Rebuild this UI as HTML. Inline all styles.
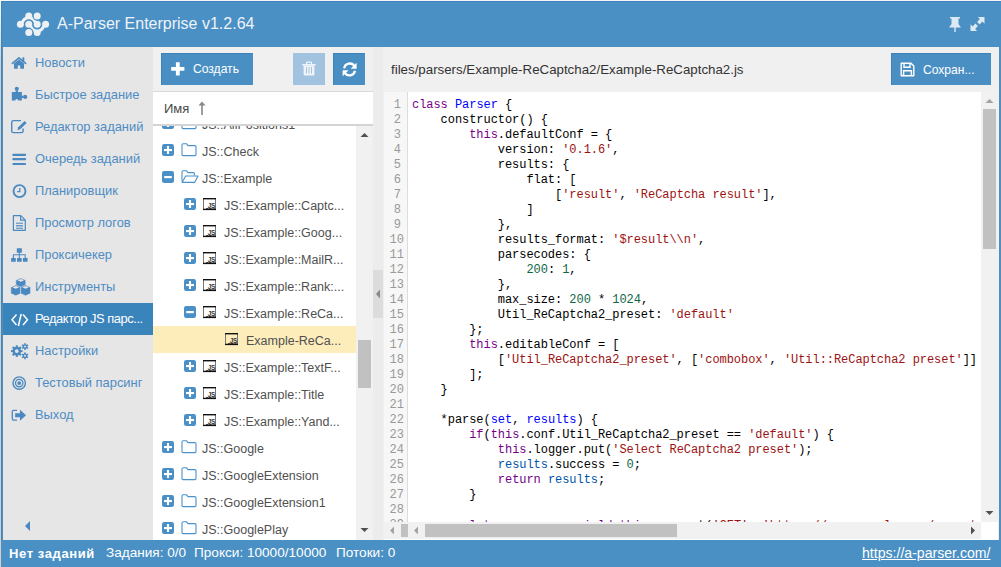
<!DOCTYPE html>
<html><head><meta charset="utf-8">
<style>
*{box-sizing:border-box;margin:0;padding:0}
html,body{width:1001px;height:567px;overflow:hidden;background:#f6f6f6;font-family:"Liberation Sans",sans-serif}
.a{position:absolute}
svg.a{overflow:visible}
#win{position:absolute;left:1px;top:1px;width:1000px;height:566px;background:#4a90c4;border-left:1px solid #3f85bd;border-top:1px solid #3f85bd;overflow:hidden}
#title{left:57px;top:15px;font-size:16px;color:#eef3f8;white-space:nowrap;line-height:18px}
#side{left:3px;top:47px;width:150px;height:493px;background:#e6e6e6}
.si{position:absolute;left:0;width:150px;height:32px}
.si .tx{position:absolute;left:32px;top:9px;font-size:12.9px;color:#4e8cc4;white-space:nowrap;line-height:14px}
.si.sel{background:#3a84bc}
.si.sel .tx{color:#fff;letter-spacing:-0.45px}
#tree{left:153px;top:47px;width:220px;height:493px;background:#fff}
#tbar{left:0;top:0;width:220px;height:45px;background:#f0f0f0;border-bottom:1px solid #d9d9d9}
.btn{position:absolute;background:#4a8fc4;border-top:1px solid #3d82b8;border-left:1px solid #3d82b8}
.btn .bt{position:absolute;color:#fff;font-size:12.1px;white-space:nowrap;line-height:14px}
#thead{left:0;top:45px;width:220px;height:34px;background:#fff;border-bottom:2px solid #d4d4d4}
#list{left:0;top:79px;width:203px;height:414px;overflow:hidden;background:#fff}
.tr{position:absolute;left:0;width:203px;height:27px}
.tr .t{position:absolute;top:7px;font-size:12.5px;color:#505050;white-space:nowrap;line-height:16px}
.tr.sel{background:#fdedbb}
#tsb{left:203px;top:79px;width:17px;height:414px;background:#f1f1f1}
#split{left:373px;top:47px;width:10px;height:493px;background:#ececec}
#ed{left:383px;top:47px;width:616px;height:493px;background:#f0f0f0}
#path{left:8px;top:15px;font-size:13.3px;color:#333;white-space:nowrap;line-height:16px}
#code{left:1px;top:45px;width:614px;height:448px;background:#fff;overflow:hidden}
#gut{left:0;top:0;width:24px;height:430px;background:#f7f7f7;border-right:1px solid #ddd}
.ln{position:absolute;right:6px;font-family:"Liberation Mono",monospace;font-size:12px;color:#999;line-height:15px}
#lines{left:28px;top:5.5px;font-family:"Liberation Mono",monospace;font-size:12px;letter-spacing:-0.05px;line-height:15px;color:#000;white-space:pre}
.k{color:#708}.d{color:#00f}.s{color:#9c1212}.n{color:#164}.v{color:#05a}
#vsb{left:597px;top:0;width:17px;height:430px;background:#f1f1f1}
#hsb{left:0;top:430px;width:597px;height:17px;background:#f1f1f1}
#corner{left:597px;top:430px;width:17px;height:17px;background:#fff}
#status{left:1px;top:540px;width:1000px;height:27px;background:#4a90c4;color:#fff;font-size:13.6px;white-space:nowrap}
#status div{position:absolute;top:5px;line-height:16px}
</style></head><body>
<div id="win"></div><div class="a" style="left:0;top:1px;width:1px;height:566px;background:linear-gradient(#fafafa,#d6d0ca 60px,#d6d0ca)"></div>
<!-- header -->
<svg class="a" style="left:0;top:0" width="60" height="47">
  <g fill="none" stroke="#eef1f4" stroke-width="3.4">
    <path d="M22.2 24.3 A6.6 6.6 0 0 1 35.4 24.3"/>
    <path d="M30.6 24.3 A6.6 6.6 0 0 0 43.8 24.3"/>
  </g>
  <g fill="#eef1f4">
    <circle cx="28.8" cy="15.9" r="3.5"/>
    <circle cx="20.4" cy="24.3" r="3.5"/><circle cx="28.8" cy="24.3" r="3.5"/><circle cx="37.2" cy="24.3" r="3.5"/><circle cx="45.6" cy="24.3" r="3.5"/>
    <circle cx="37.2" cy="32.5" r="3.5"/>
  </g>
  <g fill="none" stroke="#4a90c4" stroke-width="1.1">
    <path d="M24.2 24.3 A4.6 4.6 0 0 1 33.4 24.3"/>
    <path d="M32.6 24.3 A4.6 4.6 0 0 0 41.8 24.3"/>
  </g>
  <circle cx="37.2" cy="15.9" r="4.7" fill="#4a90c4"/><circle cx="28.8" cy="32.5" r="4.7" fill="#4a90c4"/>
  <circle cx="37.2" cy="15.9" r="3.5" fill="#eef1f4"/><circle cx="28.8" cy="32.5" r="3.5" fill="#eef1f4"/>
</svg>
<div class="a" id="title">A-Parser Enterprise v1.2.64</div>
<svg class="a" style="left:945px;top:14px" width="45" height="22">
  <g fill="#dde9f3">
    <path d="M5 3 H15 V4.5 H13.5 V10 L16 13.5 H4 L6.5 10 V4.5 H5 Z"/>
    <rect x="9.3" y="13" width="1.4" height="5"/>
    <path d="M32.8 3 H39.5 V9.7 L37.4 7.6 L34.6 10.4 L32.1 7.9 L34.9 5.1 Z"/><path d="M25.5 10.3 V17 H32.2 L30.1 14.9 L32.9 12.1 L30.4 9.6 L27.6 12.4 Z"/>
  </g>
</svg>

<div class="a" id="side">
<div class="si" style="top:0px"><svg class="a" style="left:-3px;top:0px" width="40" height="32" viewBox="0 0 40 32" ><path d="M12.4 16.4 L19 10.8 L25.6 16.4" fill="none" stroke="#4a88c0" stroke-width="1.7" stroke-linecap="round" stroke-linejoin="round"/><rect x="22.4" y="10.3" width="1.9" height="4" fill="#4a88c0"/><path d="M14 16.5 L19 12.4 L24 16.5 V21.8 H20.2 V18.6 H17.8 V21.8 H14 Z" fill="#4a88c0"/></svg><div class="tx">Новости</div></div>
<div class="si" style="top:32px"><svg class="a" style="left:-3px;top:0px" width="40" height="32" viewBox="0 0 40 32" ><path d="M11.8 12.9 H15.6 V11.5 H18 V12.9 H21.9 V16.8 H23.5 V19 H21.9 V21.6 H18.3 A1.5 1.5 0 0 0 15.3 21.6 H11.8 Z" fill="#4a88c0"/><circle cx="16.8" cy="9.8" r="2.1" fill="#4a88c0"/><circle cx="25.2" cy="17.9" r="2.1" fill="#4a88c0"/></svg><div class="tx">Быстрое задание</div></div>
<div class="si" style="top:64px"><svg class="a" style="left:-3px;top:0px" width="40" height="32" viewBox="0 0 40 32" ><path d="M21 9.6 H13.3 A1.6 1.6 0 0 0 11.7 11.2 V20 A1.6 1.6 0 0 0 13.3 21.6 H21.5 A1.6 1.6 0 0 0 23.1 20 V17.5" fill="none" stroke="#4a88c0" stroke-width="1.4"/><path d="M18.2 16.3 L24.6 9.9 L26.6 11.9 L20.2 18.3 L17.4 19.2 Z" fill="#4a88c0"/></svg><div class="tx">Редактор заданий</div></div>
<div class="si" style="top:96px"><svg class="a" style="left:-3px;top:0px" width="40" height="32" viewBox="0 0 40 32" ><rect x="12.3" y="10.8" width="13.8" height="2.2" rx="1" fill="#4a88c0"/><rect x="12.3" y="15" width="13.8" height="2.2" rx="1" fill="#4a88c0"/><rect x="12.3" y="19.9" width="13.8" height="2.2" rx="1" fill="#4a88c0"/></svg><div class="tx">Очередь заданий</div></div>
<div class="si" style="top:128px"><svg class="a" style="left:-3px;top:0px" width="40" height="32" viewBox="0 0 40 32" ><circle cx="19.5" cy="16.1" r="6" fill="none" stroke="#4a88c0" stroke-width="1.9"/><path d="M19.8 12.9 V16.6 H17.1" fill="none" stroke="#4a88c0" stroke-width="1.3"/></svg><div class="tx">Планировщик</div></div>
<div class="si" style="top:160px"><svg class="a" style="left:-3px;top:0px" width="40" height="32" viewBox="0 0 40 32" ><path d="M13.4 8.6 H20.8 L25.3 13.1 V23.3 H13.4 Z" fill="none" stroke="#4a88c0" stroke-width="1.2" stroke-linejoin="round"/><path d="M20.6 8.8 V13.2 H25" fill="none" stroke="#4a88c0" stroke-width="1.2"/><rect x="16" y="15.7" width="7" height="1" fill="#4a88c0"/><rect x="16" y="18.2" width="7" height="1.2" fill="#4a88c0"/><rect x="16" y="20.7" width="7" height="1" fill="#4a88c0"/></svg><div class="tx">Просмотр логов</div></div>
<div class="si" style="top:192px"><svg class="a" style="left:-3px;top:0px" width="40" height="32" viewBox="0 0 40 32" ><rect x="16.8" y="9.2" width="5.1" height="4.6" rx="0.6" fill="#4a88c0"/><rect x="11.1" y="18.9" width="4.7" height="3.9" rx="0.5" fill="#4a88c0"/><rect x="17" y="18.9" width="4.7" height="3.9" rx="0.5" fill="#4a88c0"/><rect x="22.9" y="18.9" width="4.7" height="3.9" rx="0.5" fill="#4a88c0"/><path d="M19.35 13.5 V19 M13.4 19 V15.7 H25.2 V19" fill="none" stroke="#4a88c0" stroke-width="1.1"/></svg><div class="tx">Проксичекер</div></div>
<div class="si" style="top:224px"><svg class="a" style="left:-3px;top:0px" width="40" height="32" viewBox="0 0 40 32" ><path d="M15.8 9.2 L20.8 7.0 L25.8 9.2 V15.600000000000001 L20.8 17.8 L15.8 15.600000000000001 Z" fill="#4a88c0" stroke="#e6e6e6" stroke-width="0.6"/><path d="M17.400000000000002 9.2 L20.8 8.0 L24.2 9.2 L20.8 10.8 Z" fill="#e6e6e6"/><path d="M10.8 16.2 L15.8 13.999999999999998 L20.8 16.2 V22.599999999999998 L15.8 24.799999999999997 L10.8 22.599999999999998 Z" fill="#4a88c0" stroke="#e6e6e6" stroke-width="0.6"/><path d="M12.4 16.2 L15.8 14.999999999999998 L19.2 16.2 L15.8 17.799999999999997 Z" fill="#e6e6e6"/><path d="M20.6 16.2 L25.6 13.999999999999998 L30.6 16.2 V22.599999999999998 L25.6 24.799999999999997 L20.6 22.599999999999998 Z" fill="#4a88c0" stroke="#e6e6e6" stroke-width="0.6"/><path d="M22.200000000000003 16.2 L25.6 14.999999999999998 L29.0 16.2 L25.6 17.799999999999997 Z" fill="#e6e6e6"/></svg><div class="tx">Инструменты</div></div>
<div class="si sel" style="top:256px"><svg class="a" style="left:-3px;top:0px" width="40" height="32" viewBox="0 0 40 32" ><path d="M16.5 11.5 L12 16.8 L16.5 22 M23 11.5 L27.5 16.8 L23 22 M21.2 10.8 L18.4 23" fill="none" stroke="#fff" stroke-width="1.5"/></svg><div class="tx">Редактор JS парс...</div></div>
<div class="si" style="top:288px"><svg class="a" style="left:-3px;top:0px" width="40" height="32" viewBox="0 0 40 32" ><g fill="#4a88c0"><circle cx="16.8" cy="16.1" r="4.3"/><rect x="15.8" y="10.3" width="2" height="11.6" transform="rotate(0 16.8 16.1)"/><rect x="15.8" y="10.3" width="2" height="11.6" transform="rotate(45 16.8 16.1)"/><rect x="15.8" y="10.3" width="2" height="11.6" transform="rotate(90 16.8 16.1)"/><rect x="15.8" y="10.3" width="2" height="11.6" transform="rotate(135 16.8 16.1)"/><circle cx="25" cy="11.6" r="2.4"/><rect x="24.3" y="8.1" width="1.4" height="7" transform="rotate(0 25 11.6)"/><rect x="24.3" y="8.1" width="1.4" height="7" transform="rotate(60 25 11.6)"/><rect x="24.3" y="8.1" width="1.4" height="7" transform="rotate(120 25 11.6)"/><circle cx="25" cy="20.8" r="2.4"/><rect x="24.3" y="17.3" width="1.4" height="7" transform="rotate(0 25 20.8)"/><rect x="24.3" y="17.3" width="1.4" height="7" transform="rotate(60 25 20.8)"/><rect x="24.3" y="17.3" width="1.4" height="7" transform="rotate(120 25 20.8)"/></g><circle cx="16.8" cy="16.1" r="1.9" fill="#e6e6e6"/><circle cx="25" cy="11.6" r="1" fill="#e6e6e6"/><circle cx="25" cy="20.8" r="1" fill="#e6e6e6"/></svg><div class="tx">Настройки</div></div>
<div class="si" style="top:320px"><svg class="a" style="left:-3px;top:0px" width="40" height="32" viewBox="0 0 40 32" ><circle cx="19.2" cy="16.1" r="6.2" fill="none" stroke="#4a88c0" stroke-width="1.4"/><circle cx="19.2" cy="16.1" r="3.7" fill="none" stroke="#4a88c0" stroke-width="1.3"/><circle cx="19.2" cy="16.1" r="1.9" fill="#4a88c0"/></svg><div class="tx">Тестовый парсинг</div></div>
<div class="si" style="top:352px"><svg class="a" style="left:-3px;top:0px" width="40" height="32" viewBox="0 0 40 32" ><path d="M17 11.4 H13.6 A1.3 1.3 0 0 0 12.3 12.7 V19.8 A1.3 1.3 0 0 0 13.6 21.1 H17" fill="none" stroke="#4a88c0" stroke-width="1.3"/><path d="M15.2 14.3 H20 V10.8 L26 16.3 L20 21.7 V18.2 H15.2 Z" fill="#4a88c0"/></svg><div class="tx">Выход</div></div>
<svg class="a" style="left:20px;top:473px" width="10" height="12"><path d="M7 1 L2 6 L7 11 Z" fill="#4a88c0"/></svg>
</div>

<div class="a" id="tree">
  <div class="a" id="tbar">
    <div class="btn" style="left:8px;top:6px;width:92px;height:32px">
      <svg class="a" style="left:9px;top:8px" width="14" height="14"><path d="M4.9 0.3 H8.7 V5 H13.4 V8.8 H8.7 V13.5 H4.9 V8.8 H0.2 V5 H4.9 Z" fill="#fff"/></svg>
      <div class="bt" style="left:31px;top:8px">Создать</div>
    </div>
    <div class="btn" style="left:140px;top:6px;width:32px;height:32px;background:#a1c3df;border:none">
      <svg class="a" style="left:9px;top:8px" width="14" height="16"><g fill="#eef4f9"><path d="M4 3 V1.6 Q4 0.6 5 0.6 H9 Q10 0.6 10 1.6 V3 H8.8 V1.8 H5.2 V3 Z"/><rect x="0.3" y="3" width="13.4" height="1.6"/><path d="M1.6 4.4 H12.4 V13.2 Q12.4 14.4 11.2 14.4 H2.8 Q1.6 14.4 1.6 13.2 Z"/></g><g fill="#a1c3df"><rect x="4" y="6" width="1" height="6.5"/><rect x="6.5" y="6" width="1" height="6.5"/><rect x="9" y="6" width="1" height="6.5"/></g></svg>
    </div>
    <div class="btn" style="left:180px;top:6px;width:32px;height:32px">
      <svg class="a" style="left:8px;top:8px" width="16" height="16"><g fill="none" stroke="#fff" stroke-width="2.3"><path d="M2.2 6.3 A5.6 5.6 0 0 1 12.5 4.2"/><path d="M13 8.8 A5.6 5.6 0 0 1 2.8 10.9"/></g><path d="M14.6 0.8 V6.8 H8.6 Z" fill="#fff"/><path d="M0.6 14.2 V8.2 H6.6 Z" fill="#fff"/></svg>
    </div>
  </div>
  <div class="a" id="thead">
    <div class="a" style="left:11px;top:9px;font-size:13px;color:#484848;line-height:16px">Имя</div>
    <svg class="a" style="left:45px;top:9px" width="8" height="15"><path d="M4 0.5 L7.5 4.5 H4.8 V14 H3.2 V4.5 H0.5 Z" fill="#888"/></svg>
  </div>
  <div class="a" id="list">
<div class="tr" style="top:-16px"><svg class="a" style="left:9px;top:7px" width="12" height="12"><rect x="0" y="0" width="12" height="12" rx="2.2" fill="#4a8fc6"/><rect x="2" y="5" width="8" height="2.1" fill="#fff"/><rect x="4.95" y="2" width="2.1" height="8" fill="#fff"/></svg><svg class="a" style="left:28px;top:6px" width="18" height="14"><path d="M1 2.2 Q1 0.8 2.2 0.8 H5.6 L7 2.6 H13.8 Q15 2.6 15 3.8 V11.6 Q15 12.6 14 12.6 H2 Q1 12.6 1 11.6 Z" fill="none" stroke="#4a92c9" stroke-width="1.1"/></svg><div class="t" style="left:49px">JS::AllPositions1</div></div>
<div class="tr" style="top:11px"><svg class="a" style="left:9px;top:7px" width="12" height="12"><rect x="0" y="0" width="12" height="12" rx="2.2" fill="#4a8fc6"/><rect x="2" y="5" width="8" height="2.1" fill="#fff"/><rect x="4.95" y="2" width="2.1" height="8" fill="#fff"/></svg><svg class="a" style="left:28px;top:6px" width="18" height="14"><path d="M1 2.2 Q1 0.8 2.2 0.8 H5.6 L7 2.6 H13.8 Q15 2.6 15 3.8 V11.6 Q15 12.6 14 12.6 H2 Q1 12.6 1 11.6 Z" fill="none" stroke="#4a92c9" stroke-width="1.1"/></svg><div class="t" style="left:49px">JS::Check</div></div>
<div class="tr" style="top:38px"><svg class="a" style="left:9px;top:7px" width="12" height="12"><rect x="0" y="0" width="12" height="12" rx="2.2" fill="#4a8fc6"/><rect x="2.2" y="5" width="7.6" height="2.2" fill="#fff"/></svg><svg class="a" style="left:28px;top:6px" width="18" height="14"><path d="M1 11.6 V2.2 Q1 0.8 2.2 0.8 H5.6 L7 2.6 H12.4 Q13.4 2.6 13.4 3.6 V5.6" fill="none" stroke="#4a92c9" stroke-width="1.1"/><path d="M1.2 12.4 L4.6 6 H17 L13.6 12.4 Z" fill="none" stroke="#4a92c9" stroke-width="1.1" stroke-linejoin="round"/></svg><div class="t" style="left:49px">JS::Example</div></div>
<div class="tr" style="top:65px"><svg class="a" style="left:31px;top:7px" width="12" height="12"><rect x="0" y="0" width="12" height="12" rx="2.2" fill="#4a8fc6"/><rect x="2" y="5" width="8" height="2.1" fill="#fff"/><rect x="4.95" y="2" width="2.1" height="8" fill="#fff"/></svg><svg class="a" style="left:49px;top:7px" width="15" height="13"><rect x="1.5" y="0.5" width="12" height="11.2" fill="none" stroke="#777" stroke-width="1"/><rect x="1" y="0" width="13" height="1.4" fill="#111"/><path d="M1 12 V10.8 L3.5 10.8 L5 10 L6.5 10.4 L8 9.9 L10 10.5 L12 10.3 L14 10.8 V12 Z" fill="#111"/><text x="9.4" y="9.6" font-family="Liberation Sans" font-size="6.4" font-weight="bold" fill="#333" text-anchor="middle" letter-spacing="-0.2">JS</text></svg><div class="t" style="left:71px">JS::Example::Captc...</div></div>
<div class="tr" style="top:92px"><svg class="a" style="left:31px;top:7px" width="12" height="12"><rect x="0" y="0" width="12" height="12" rx="2.2" fill="#4a8fc6"/><rect x="2" y="5" width="8" height="2.1" fill="#fff"/><rect x="4.95" y="2" width="2.1" height="8" fill="#fff"/></svg><svg class="a" style="left:49px;top:7px" width="15" height="13"><rect x="1.5" y="0.5" width="12" height="11.2" fill="none" stroke="#777" stroke-width="1"/><rect x="1" y="0" width="13" height="1.4" fill="#111"/><path d="M1 12 V10.8 L3.5 10.8 L5 10 L6.5 10.4 L8 9.9 L10 10.5 L12 10.3 L14 10.8 V12 Z" fill="#111"/><text x="9.4" y="9.6" font-family="Liberation Sans" font-size="6.4" font-weight="bold" fill="#333" text-anchor="middle" letter-spacing="-0.2">JS</text></svg><div class="t" style="left:71px">JS::Example::Goog...</div></div>
<div class="tr" style="top:119px"><svg class="a" style="left:31px;top:7px" width="12" height="12"><rect x="0" y="0" width="12" height="12" rx="2.2" fill="#4a8fc6"/><rect x="2" y="5" width="8" height="2.1" fill="#fff"/><rect x="4.95" y="2" width="2.1" height="8" fill="#fff"/></svg><svg class="a" style="left:49px;top:7px" width="15" height="13"><rect x="1.5" y="0.5" width="12" height="11.2" fill="none" stroke="#777" stroke-width="1"/><rect x="1" y="0" width="13" height="1.4" fill="#111"/><path d="M1 12 V10.8 L3.5 10.8 L5 10 L6.5 10.4 L8 9.9 L10 10.5 L12 10.3 L14 10.8 V12 Z" fill="#111"/><text x="9.4" y="9.6" font-family="Liberation Sans" font-size="6.4" font-weight="bold" fill="#333" text-anchor="middle" letter-spacing="-0.2">JS</text></svg><div class="t" style="left:71px">JS::Example::MailR...</div></div>
<div class="tr" style="top:146px"><svg class="a" style="left:31px;top:7px" width="12" height="12"><rect x="0" y="0" width="12" height="12" rx="2.2" fill="#4a8fc6"/><rect x="2" y="5" width="8" height="2.1" fill="#fff"/><rect x="4.95" y="2" width="2.1" height="8" fill="#fff"/></svg><svg class="a" style="left:49px;top:7px" width="15" height="13"><rect x="1.5" y="0.5" width="12" height="11.2" fill="none" stroke="#777" stroke-width="1"/><rect x="1" y="0" width="13" height="1.4" fill="#111"/><path d="M1 12 V10.8 L3.5 10.8 L5 10 L6.5 10.4 L8 9.9 L10 10.5 L12 10.3 L14 10.8 V12 Z" fill="#111"/><text x="9.4" y="9.6" font-family="Liberation Sans" font-size="6.4" font-weight="bold" fill="#333" text-anchor="middle" letter-spacing="-0.2">JS</text></svg><div class="t" style="left:71px">JS::Example::Rank:...</div></div>
<div class="tr" style="top:173px"><svg class="a" style="left:31px;top:7px" width="12" height="12"><rect x="0" y="0" width="12" height="12" rx="2.2" fill="#4a8fc6"/><rect x="2.2" y="5" width="7.6" height="2.2" fill="#fff"/></svg><svg class="a" style="left:49px;top:7px" width="15" height="13"><rect x="1.5" y="0.5" width="12" height="11.2" fill="none" stroke="#777" stroke-width="1"/><rect x="1" y="0" width="13" height="1.4" fill="#111"/><path d="M1 12 V10.8 L3.5 10.8 L5 10 L6.5 10.4 L8 9.9 L10 10.5 L12 10.3 L14 10.8 V12 Z" fill="#111"/><text x="9.4" y="9.6" font-family="Liberation Sans" font-size="6.4" font-weight="bold" fill="#333" text-anchor="middle" letter-spacing="-0.2">JS</text></svg><div class="t" style="left:71px">JS::Example::ReCa...</div></div>
<div class="tr sel" style="top:200px"><svg class="a" style="left:71px;top:7px" width="15" height="13"><rect x="1.5" y="0.5" width="12" height="11.2" fill="none" stroke="#777" stroke-width="1"/><rect x="1" y="0" width="13" height="1.4" fill="#111"/><path d="M1 12 V10.8 L3.5 10.8 L5 10 L6.5 10.4 L8 9.9 L10 10.5 L12 10.3 L14 10.8 V12 Z" fill="#111"/><text x="9.4" y="9.6" font-family="Liberation Sans" font-size="6.4" font-weight="bold" fill="#333" text-anchor="middle" letter-spacing="-0.2">JS</text></svg><div class="t" style="left:93px">Example-ReCa...</div></div>
<div class="tr" style="top:227px"><svg class="a" style="left:31px;top:7px" width="12" height="12"><rect x="0" y="0" width="12" height="12" rx="2.2" fill="#4a8fc6"/><rect x="2" y="5" width="8" height="2.1" fill="#fff"/><rect x="4.95" y="2" width="2.1" height="8" fill="#fff"/></svg><svg class="a" style="left:49px;top:7px" width="15" height="13"><rect x="1.5" y="0.5" width="12" height="11.2" fill="none" stroke="#777" stroke-width="1"/><rect x="1" y="0" width="13" height="1.4" fill="#111"/><path d="M1 12 V10.8 L3.5 10.8 L5 10 L6.5 10.4 L8 9.9 L10 10.5 L12 10.3 L14 10.8 V12 Z" fill="#111"/><text x="9.4" y="9.6" font-family="Liberation Sans" font-size="6.4" font-weight="bold" fill="#333" text-anchor="middle" letter-spacing="-0.2">JS</text></svg><div class="t" style="left:71px">JS::Example::TextF...</div></div>
<div class="tr" style="top:254px"><svg class="a" style="left:31px;top:7px" width="12" height="12"><rect x="0" y="0" width="12" height="12" rx="2.2" fill="#4a8fc6"/><rect x="2" y="5" width="8" height="2.1" fill="#fff"/><rect x="4.95" y="2" width="2.1" height="8" fill="#fff"/></svg><svg class="a" style="left:49px;top:7px" width="15" height="13"><rect x="1.5" y="0.5" width="12" height="11.2" fill="none" stroke="#777" stroke-width="1"/><rect x="1" y="0" width="13" height="1.4" fill="#111"/><path d="M1 12 V10.8 L3.5 10.8 L5 10 L6.5 10.4 L8 9.9 L10 10.5 L12 10.3 L14 10.8 V12 Z" fill="#111"/><text x="9.4" y="9.6" font-family="Liberation Sans" font-size="6.4" font-weight="bold" fill="#333" text-anchor="middle" letter-spacing="-0.2">JS</text></svg><div class="t" style="left:71px">JS::Example::Title</div></div>
<div class="tr" style="top:281px"><svg class="a" style="left:31px;top:7px" width="12" height="12"><rect x="0" y="0" width="12" height="12" rx="2.2" fill="#4a8fc6"/><rect x="2" y="5" width="8" height="2.1" fill="#fff"/><rect x="4.95" y="2" width="2.1" height="8" fill="#fff"/></svg><svg class="a" style="left:49px;top:7px" width="15" height="13"><rect x="1.5" y="0.5" width="12" height="11.2" fill="none" stroke="#777" stroke-width="1"/><rect x="1" y="0" width="13" height="1.4" fill="#111"/><path d="M1 12 V10.8 L3.5 10.8 L5 10 L6.5 10.4 L8 9.9 L10 10.5 L12 10.3 L14 10.8 V12 Z" fill="#111"/><text x="9.4" y="9.6" font-family="Liberation Sans" font-size="6.4" font-weight="bold" fill="#333" text-anchor="middle" letter-spacing="-0.2">JS</text></svg><div class="t" style="left:71px">JS::Example::Yand...</div></div>
<div class="tr" style="top:308px"><svg class="a" style="left:9px;top:7px" width="12" height="12"><rect x="0" y="0" width="12" height="12" rx="2.2" fill="#4a8fc6"/><rect x="2" y="5" width="8" height="2.1" fill="#fff"/><rect x="4.95" y="2" width="2.1" height="8" fill="#fff"/></svg><svg class="a" style="left:28px;top:6px" width="18" height="14"><path d="M1 2.2 Q1 0.8 2.2 0.8 H5.6 L7 2.6 H13.8 Q15 2.6 15 3.8 V11.6 Q15 12.6 14 12.6 H2 Q1 12.6 1 11.6 Z" fill="none" stroke="#4a92c9" stroke-width="1.1"/></svg><div class="t" style="left:49px">JS::Google</div></div>
<div class="tr" style="top:335px"><svg class="a" style="left:9px;top:7px" width="12" height="12"><rect x="0" y="0" width="12" height="12" rx="2.2" fill="#4a8fc6"/><rect x="2" y="5" width="8" height="2.1" fill="#fff"/><rect x="4.95" y="2" width="2.1" height="8" fill="#fff"/></svg><svg class="a" style="left:28px;top:6px" width="18" height="14"><path d="M1 2.2 Q1 0.8 2.2 0.8 H5.6 L7 2.6 H13.8 Q15 2.6 15 3.8 V11.6 Q15 12.6 14 12.6 H2 Q1 12.6 1 11.6 Z" fill="none" stroke="#4a92c9" stroke-width="1.1"/></svg><div class="t" style="left:49px">JS::GoogleExtension</div></div>
<div class="tr" style="top:362px"><svg class="a" style="left:9px;top:7px" width="12" height="12"><rect x="0" y="0" width="12" height="12" rx="2.2" fill="#4a8fc6"/><rect x="2" y="5" width="8" height="2.1" fill="#fff"/><rect x="4.95" y="2" width="2.1" height="8" fill="#fff"/></svg><svg class="a" style="left:28px;top:6px" width="18" height="14"><path d="M1 2.2 Q1 0.8 2.2 0.8 H5.6 L7 2.6 H13.8 Q15 2.6 15 3.8 V11.6 Q15 12.6 14 12.6 H2 Q1 12.6 1 11.6 Z" fill="none" stroke="#4a92c9" stroke-width="1.1"/></svg><div class="t" style="left:49px">JS::GoogleExtension1</div></div>
<div class="tr" style="top:389px"><svg class="a" style="left:9px;top:7px" width="12" height="12"><rect x="0" y="0" width="12" height="12" rx="2.2" fill="#4a8fc6"/><rect x="2" y="5" width="8" height="2.1" fill="#fff"/><rect x="4.95" y="2" width="2.1" height="8" fill="#fff"/></svg><svg class="a" style="left:28px;top:6px" width="18" height="14"><path d="M1 2.2 Q1 0.8 2.2 0.8 H5.6 L7 2.6 H13.8 Q15 2.6 15 3.8 V11.6 Q15 12.6 14 12.6 H2 Q1 12.6 1 11.6 Z" fill="none" stroke="#4a92c9" stroke-width="1.1"/></svg><div class="t" style="left:49px">JS::GooglePlay</div></div>
  </div>
  <div class="a" id="tsb">
    <svg class="a" style="left:4px;top:6px" width="9" height="6"><path d="M0.5 5 L4.5 1 L8.5 5 Z" fill="#505050"/></svg>
    <div class="a" style="left:2px;top:214px;width:13px;height:48px;background:#c1c1c1"></div>
    <svg class="a" style="left:4px;top:401px" width="9" height="6"><path d="M0.5 1 L4.5 5 L8.5 1 Z" fill="#505050"/></svg>
  </div>
</div>

<div class="a" id="split">
  <div class="a" style="left:0;top:223px;width:10px;height:48px;background:#dcdcdc"></div>
  <svg class="a" style="left:2px;top:242px" width="6" height="10"><path d="M5 0.5 L1 5 L5 9.5 Z" fill="#888"/></svg>
</div>

<div class="a" id="ed">
  <div class="a" id="path">files/parsers/Example-ReCaptcha2/Example-ReCaptcha2.js</div>
  <div class="btn" style="left:508px;top:6px;width:100px;height:32px">
    <svg class="a" style="left:8px;top:8px" width="16" height="16"><g fill="none" stroke="#fff" stroke-width="1.4"><path d="M1.2 1.2 H11 L13.8 4 V13.8 H1.2 Z" stroke-linejoin="round"/><path d="M4 1.3 V5.2 H10 V1.3"/><path d="M3.6 13.7 V8.8 H11.4 V13.7"/></g></svg>
    <div class="bt" style="left:31px;top:9px">Сохран...</div>
  </div>
  <div class="a" id="code">
    <div class="a" id="gut"><div class="ln" style="top:6px;right:6px">1</div><div class="ln" style="top:21px;right:6px">2</div><div class="ln" style="top:36px;right:6px">3</div><div class="ln" style="top:51px;right:6px">4</div><div class="ln" style="top:66px;right:6px">5</div><div class="ln" style="top:81px;right:6px">6</div><div class="ln" style="top:96px;right:6px">7</div><div class="ln" style="top:111px;right:6px">8</div><div class="ln" style="top:126px;right:6px">9</div><div class="ln" style="top:141px;right:3px">10</div><div class="ln" style="top:156px;right:3px">11</div><div class="ln" style="top:171px;right:3px">12</div><div class="ln" style="top:186px;right:3px">13</div><div class="ln" style="top:201px;right:3px">14</div><div class="ln" style="top:216px;right:3px">15</div><div class="ln" style="top:231px;right:3px">16</div><div class="ln" style="top:246px;right:3px">17</div><div class="ln" style="top:261px;right:3px">18</div><div class="ln" style="top:276px;right:3px">19</div><div class="ln" style="top:291px;right:3px">20</div><div class="ln" style="top:306px;right:3px">21</div><div class="ln" style="top:321px;right:3px">22</div><div class="ln" style="top:336px;right:3px">23</div><div class="ln" style="top:351px;right:3px">24</div><div class="ln" style="top:366px;right:3px">25</div><div class="ln" style="top:381px;right:3px">26</div><div class="ln" style="top:396px;right:3px">27</div><div class="ln" style="top:411px;right:3px">28</div><div class="ln" style="top:426px;right:3px">29</div></div>
    <div class="a" id="lines"><span class="k">class</span> <span class="d">Parser</span> {
    constructor() {
        <span class="k">this</span>.defaultConf = {
            version: <span class="s">&#x27;0.1.6&#x27;</span>,
            results: {
                flat: [
                    [<span class="s">&#x27;result&#x27;</span>, <span class="s">&#x27;ReCaptcha result&#x27;</span>],
                ]
            },
            results_format: <span class="s">&#x27;$result\\n&#x27;</span>,
            parsecodes: {
                <span class="n">200</span>: <span class="n">1</span>,
            },
            max_size: <span class="n">200</span> * <span class="n">1024</span>,
            Util_ReCaptcha2_preset: <span class="s">&#x27;default&#x27;</span>
        };
        <span class="k">this</span>.editableConf = [
            [<span class="s">&#x27;Util_ReCaptcha2_preset&#x27;</span>, [<span class="s">&#x27;combobox&#x27;</span>, <span class="s">&#x27;Util::ReCaptcha2 preset&#x27;</span>]]
        ];
    }

    *parse(<span class="d">set</span>, <span class="d">results</span>) {
        <span class="k">if</span>(<span class="k">this</span>.conf.Util_ReCaptcha2_preset == <span class="s">&#x27;default&#x27;</span>) {
            <span class="k">this</span>.logger.put(<span class="s">&#x27;Select ReCaptcha2 preset&#x27;</span>);
            <span class="v">results</span>.success = <span class="n">0</span>;
            <span class="k">return</span> <span class="v">results</span>;
        }

<span style="position:relative;top:1.5px">        <span class="k">let</span> <span class="d">response</span> = <span class="k">yield</span> <span class="k">this</span>.request(<span class="s">&#x27;GET&#x27;</span>, <span class="s">&#x27;https://www.google.com/recaptcha/api2/demo&#x27;</span>);</span></div>
    <div class="a" id="vsb">
      <svg class="a" style="left:4px;top:6px" width="9" height="6"><path d="M0.5 5 L4.5 1 L8.5 5 Z" fill="#a3a3a3"/></svg>
      <div class="a" style="left:2px;top:17px;width:13px;height:140px;background:#c1c1c1"></div>
      <svg class="a" style="left:4px;top:418px" width="9" height="6"><path d="M0.5 1 L4.5 5 L8.5 1 Z" fill="#505050"/></svg>
    </div>
    <div class="a" id="hsb">
      <svg class="a" style="left:5px;top:4px" width="6" height="9"><path d="M5 0.5 L1 4.5 L5 8.5 Z" fill="#a3a3a3"/></svg>
      <div class="a" style="left:17px;top:2px;width:7px;height:13px;background:#c1c1c1"></div>
      <svg class="a" style="left:29px;top:4px" width="6" height="9"><path d="M5 0.5 L1 4.5 L5 8.5 Z" fill="#a3a3a3"/></svg>
      <div class="a" style="left:41px;top:2px;width:252px;height:13px;background:#c1c1c1"></div>
      <svg class="a" style="left:586px;top:4px" width="6" height="9"><path d="M1 0.5 L5 4.5 L1 8.5 Z" fill="#505050"/></svg>
    </div>
    <div class="a" id="corner"></div>
  </div>
</div>

<div class="a" id="status">
  <div style="left:8px;font-weight:bold;font-size:13px;letter-spacing:0.6px;top:6px">Нет заданий</div>
  <div style="left:105px">Задания: 0/0</div>
  <div style="left:193px">Прокси: 10000/10000</div>
  <div style="left:335px">Потоки: 0</div>
  <div style="left:861px;font-size:14.1px;text-decoration:underline">https://a-parser.com/</div>
</div>
</body></html>
